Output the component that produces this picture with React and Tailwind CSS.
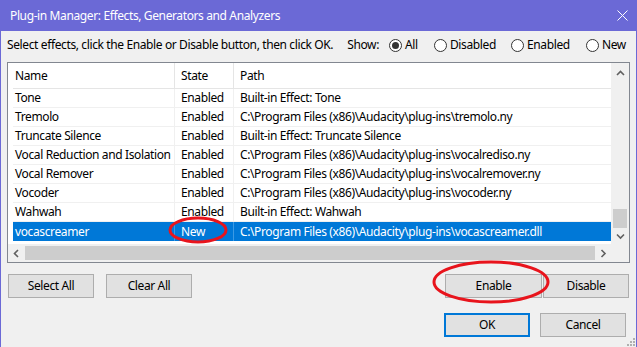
import React from 'react';

const rows = [
  { name: 'Tone', state: 'Enabled', path: 'Built-in Effect: Tone' },
  { name: 'Tremolo', state: 'Enabled', path: 'C:\\Program Files (x86)\\Audacity\\plug-ins\\tremolo.ny' },
  { name: 'Truncate Silence', state: 'Enabled', path: 'Built-in Effect: Truncate Silence' },
  { name: 'Vocal Reduction and Isolation', state: 'Enabled', path: 'C:\\Program Files (x86)\\Audacity\\plug-ins\\vocalrediso.ny' },
  { name: 'Vocal Remover', state: 'Enabled', path: 'C:\\Program Files (x86)\\Audacity\\plug-ins\\vocalremover.ny' },
  { name: 'Vocoder', state: 'Enabled', path: 'C:\\Program Files (x86)\\Audacity\\plug-ins\\vocoder.ny' },
  { name: 'Wahwah', state: 'Enabled', path: 'Built-in Effect: Wahwah' },
  { name: 'vocascreamer', state: 'New', path: 'C:\\Program Files (x86)\\Audacity\\plug-ins\\vocascreamer.dll', selected: true },
];

function Radio({ label, checked, className = '' }) {
  return (
    <div className={`flex items-center gap-[3px] ${className}`}>
      <span className="w-[13px] h-[13px] rounded-full border border-[#333] bg-white flex items-center justify-center">
        {checked && <span className="w-[7px] h-[7px] rounded-full bg-[#333]" />}
      </span>
      <span>{label}</span>
    </div>
  );
}

function Button({ children, className = '' }) {
  return (
    <div className={`h-[24px] flex items-center justify-center bg-[#e1e1e1] border border-[#adadad] ${className}`}>
      {children}
    </div>
  );
}

function Chevron({ dir }) {
  const d = {
    up: 'M1 5 L4.5 1.5 L8 5',
    down: 'M1 1.5 L4.5 5 L8 1.5',
    left: 'M5 1 L1.5 4.5 L5 8',
    right: 'M1.5 1 L5 4.5 L1.5 8',
  }[dir];
  const vert = dir === 'up' || dir === 'down';
  return (
    <svg width={vert ? 9 : 7} height={vert ? 7 : 9} viewBox={vert ? '0 0 9 7' : '0 0 7 9'}>
      <path d={d} fill="none" stroke="#606060" strokeWidth="1.6" />
    </svg>
  );
}

export default function App() {
  return (
    <div
      className="relative w-[637px] h-[347px] bg-[#f0f0f0] border-x border-[#6b69d6] flex flex-col text-[12px] tracking-[-0.38px] text-black whitespace-nowrap overflow-hidden"
      style={{ fontFamily: '"Noto Sans", "Open Sans", sans-serif' }}
    >
      {/* Title bar */}
      <div className="h-[31px] shrink-0 bg-[#6b69d6] flex items-center justify-between pl-[9px] pr-[8px] text-white text-[12px]">
        <span>Plug-in Manager: Effects, Generators and Analyzers</span>
        <svg width="11" height="11" viewBox="0 0 11 11">
          <path d="M0.5 0.5 L10.5 10.5 M10.5 0.5 L0.5 10.5" stroke="white" strokeWidth="1" />
        </svg>
      </div>

      {/* Instructions + filter */}
      <div className="h-[27px] shrink-0 flex items-center pl-[6px] pr-[8px] pt-[1px]">
        <span>Select effects, click the Enable or Disable button, then click OK.</span>
        <span className="ml-[14px]">Show:</span>
        <div className="ml-[10px] flex items-center">
          <Radio label="All" checked className="w-[45px]" />
          <Radio label="Disabled" className="w-[77px]" />
          <Radio label="Enabled" className="w-[75px]" />
          <Radio label="New" />
        </div>
      </div>

      {/* List */}
      <div className="mt-[4px] mx-[6px] h-[201px] shrink-0 border border-[#828790] bg-white flex flex-col">
        <div className="flex flex-1 min-h-0">
          <div className="flex-1 flex flex-col pl-[5px]">
            <div className="h-[26px] shrink-0 flex border-b border-[#e5e5e5]">
              <div className="w-[162px] pl-[2px] flex items-center border-r border-[#e5e5e5]">Name</div>
              <div className="w-[59px] pl-[6px] flex items-center border-r border-[#e5e5e5]">State</div>
              <div className="flex-1 pl-[6px] flex items-center">Path</div>
            </div>
            {rows.map((r) => (
              <div
                key={r.name}
                className={`h-[19px] shrink-0 flex ${r.selected ? 'bg-[#0078d7] text-white' : 'border-b border-[#f0f0f0]'}`}
              >
                <div className={`w-[162px] pl-[2px] flex items-center border-r ${r.selected ? 'border-[#3c9ae4]' : 'border-[#f0f0f0]'}`}>{r.name}</div>
                <div className={`w-[59px] pl-[6px] flex items-center border-r ${r.selected ? 'border-[#3c9ae4]' : 'border-[#f0f0f0]'}`}>{r.state}</div>
                <div className="flex-1 pl-[6px] flex items-center overflow-hidden">{r.path}</div>
              </div>
            ))}
          </div>
          {/* Vertical scrollbar */}
          <div className="w-[18px] shrink-0 bg-[#f0f0f0] flex flex-col">
            <div className="h-[20px] flex items-center justify-center"><Chevron dir="up" /></div>
            <div className="flex-1 w-full px-[2px] flex flex-col justify-end">
              <div className="h-[19px] bg-[#cdcdcd]" />
            </div>
            <div className="h-[16px] flex items-center justify-center"><Chevron dir="down" /></div>
          </div>
        </div>
        {/* Horizontal scrollbar */}
        <div className="h-[18px] shrink-0 flex bg-[#f0f0f0]">
          <div className="flex-1 flex items-center">
            <div className="w-[17px] flex justify-center"><Chevron dir="left" /></div>
            <div className="w-[570px] h-[14px] bg-[#cdcdcd]" />
            <div className="flex-1 flex justify-center"><Chevron dir="right" /></div>
          </div>
          <div className="w-[18px] bg-[#f0f0f0]" />
        </div>
      </div>

      {/* Button rows */}
      <div className="mt-[11px] flex px-[7px]">
        <Button className="w-[86px]">Select All</Button>
        <Button className="w-[86px] ml-[12px]">Clear All</Button>
        <Button className="w-[97px] ml-auto">Enable</Button>
        <Button className="w-[86px] ml-[1px]">Disable</Button>
      </div>
      <div className="mt-[15px] flex justify-end pr-[10px]">
        <div className="w-[86px] h-[24px] flex items-center justify-center bg-[#e1e1e1] border-2 border-[#0078d7]">OK</div>
        <Button className="w-[86px] ml-[10px]">Cancel</Button>
      </div>

      {/* Resize grip */}
      <svg className="absolute right-[1px] bottom-[1px]" width="10" height="10" viewBox="0 0 10 10">
        {[[8, 2], [8, 5], [8, 8], [5, 5], [5, 8], [2, 8]].map(([x, y]) => (
          <rect key={`${x}-${y}`} x={x} y={y} width="2" height="2" fill="#b0b0b0" />
        ))}
      </svg>

      {/* Red annotation ellipses */}
      <svg className="absolute left-0 top-0 pointer-events-none" width="637" height="347">
        <ellipse cx="197" cy="230" rx="28" ry="12" fill="none" stroke="#e8141c" strokeWidth="3" />
        <ellipse cx="490" cy="282" rx="57" ry="20" fill="none" stroke="#e8141c" strokeWidth="3" />
      </svg>
    </div>
  );
}
